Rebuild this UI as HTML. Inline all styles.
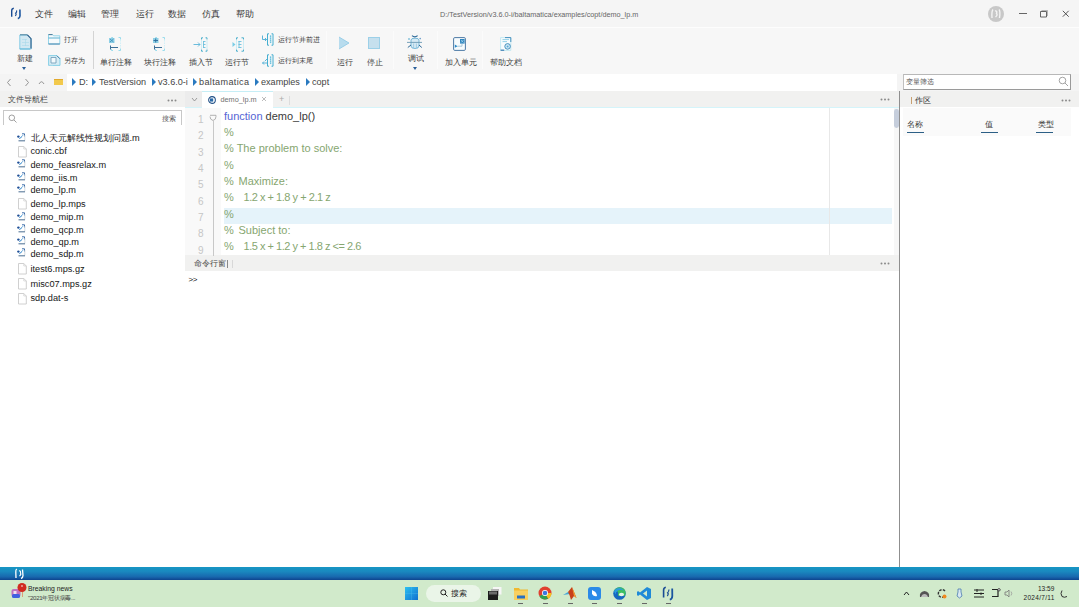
<!DOCTYPE html>
<html><head><meta charset="utf-8">
<style>
*{margin:0;padding:0;box-sizing:border-box}
html,body{width:1079px;height:607px;overflow:hidden;background:#fff;font-family:"Liberation Sans",sans-serif;color:#333}
.a{position:absolute;white-space:pre}
svg.a{overflow:visible}
#title{left:0;top:0;width:1079px;height:27px;background:#f5f5f5}
#tline{left:0;top:27px;width:1079px;height:1px;background:#fdfdfd}
#tool{left:0;top:28px;width:1079px;height:46px;background:#f7f7f7}
#addr{left:0;top:74px;width:1079px;height:17px;background:#f4f4f4}
#addrw{left:67px;top:74px;width:830px;height:16.5px;background:#fff}
#lhead{left:0;top:91px;width:185px;height:16px;background:#f1f1f0}
#lbody{left:0;top:107px;width:185px;height:460px;background:#fff}
#ehead{left:185px;top:91px;width:714px;height:16px;background:#f1f1f0}
#ebody{left:185px;top:107px;width:714px;height:148px;background:#fff}
#chead{left:185px;top:255px;width:714px;height:16px;background:#f1f1f0}
#cbody{left:185px;top:271px;width:714px;height:296px;background:#fff}
#vsep{left:899px;top:91px;width:1px;height:476px;background:#8f8f8f}
#rhead{left:900px;top:91px;width:179px;height:16px;background:#f1f1f0}
#rbody{left:900px;top:107px;width:179px;height:460px;background:#fff}
#tbblue{left:0;top:567px;width:1079px;height:13px;background:linear-gradient(#1697c4 0%,#1a88bf 35%,#1868ae 75%,#0e438e 100%)}
#tbgreen{left:0;top:580px;width:1079px;height:27px;background:#d1eacb}
.menu{top:9px;font-size:8.8px;line-height:11px;color:#3a3a3a}
.lbl{font-size:8px;line-height:10px;color:#3c3c3c}
.code{font-size:11px;line-height:13px;color:#86a670}
.ln{font-size:10px;line-height:12px;color:#c6c6c6;width:12px;text-align:right;left:191.5px}
.file{font-size:9.2px;line-height:11px;color:#161616;left:30.5px}
.crumb{font-size:9.1px;line-height:11px;color:#444;top:77px}
.tri{width:0;height:0;border-top:4px solid transparent;border-bottom:4px solid transparent;border-left:4px solid #2a7ac0;top:78px}
</style></head><body>
<div class="a" id="title"></div>
<div class="a" id="tline"></div>
<div class="a" id="tool"></div>
<div class="a" id="addr"></div>
<div class="a" id="addrw"></div>
<div class="a" id="lhead"></div>
<div class="a" id="lbody"></div>
<div class="a" id="ehead"></div>
<div class="a" id="ebody"></div>
<div class="a" id="chead"></div>
<div class="a" id="cbody"></div>
<div class="a" id="rhead"></div>
<div class="a" id="rbody"></div>
<div class="a" id="vsep"></div>
<div class="a" id="tbblue"></div>
<div class="a" id="tbgreen"></div>

<!-- ===== TITLE BAR ===== -->
<svg class="a" style="left:6px;top:4px" width="20" height="18" viewBox="0 0 20 18">
 <path d="M7.8 4.2 Q5.7 4.6 5.7 6.8 L5.7 12.8" stroke="#1a4c94" stroke-width="1.4" fill="none"/>
 <path d="M10.6 6.3 Q11.1 8 9.6 9.2 Q10.8 10.3 9.3 12" stroke="#1a4c94" stroke-width="1.1" fill="none"/>
 <path d="M13.9 5.4 L14 12 Q13.9 14.1 11.8 14.6" stroke="#1b56a0" stroke-width="1.6" fill="none"/>
</svg>
<div class="a menu" style="left:35px">文件</div>
<div class="a menu" style="left:68px">编辑</div>
<div class="a menu" style="left:101px">管理</div>
<div class="a menu" style="left:136px">运行</div>
<div class="a menu" style="left:168px">数据</div>
<div class="a menu" style="left:202px">仿真</div>
<div class="a menu" style="left:236px">帮助</div>
<div class="a" style="left:440px;top:10px;font-size:7.25px;line-height:9px;color:#666">D:/TestVersion/v3.6.0-i/baltamatica/examples/copt/demo_lp.m</div>
<!-- right controls -->
<svg class="a" style="left:987px;top:5px" width="18" height="18" viewBox="0 0 18 18">
 <circle cx="9" cy="9" r="8" fill="#c8c8c8"/>
 <path d="M6 4.5 Q4.5 6 5 13 M8 6 Q10.5 5.5 9.5 8.5 Q11 10 8.5 12 M12 4.5 Q13.5 6 12.5 13" stroke="#f4f4f4" stroke-width="1.4" fill="none"/>
</svg>
<div class="a" style="left:1018.5px;top:13px;width:8.5px;height:1px;background:#666"></div>
<svg class="a" style="left:1039px;top:9px" width="10" height="9" viewBox="0 0 10 9"><path d="M1.5 2.5 H7.5 V8 H1.5 Z" fill="none" stroke="#555" stroke-width="0.9"/><path d="M2.5 1.5 H8.5 V7" fill="none" stroke="#999" stroke-width="0.7"/></svg>
<svg class="a" style="left:1062px;top:10px" width="7.5" height="7.5" viewBox="0 0 7.5 7.5"><path d="M0.8 0.8L6.7 6.7M6.7 0.8L0.8 6.7" stroke="#444" stroke-width="0.9"/></svg>

<!-- ===== TOOLBAR ===== -->
<!-- 新建 -->
<svg class="a" style="left:18.5px;top:33.5px" width="13" height="16" viewBox="0 0 13 16">
 <path d="M0.8 1 H8.5 L12.2 4.8 V15 H0.8 Z" fill="#d2e8f2" stroke="#7cc8e4" stroke-width="0.9"/>
 <path d="M1 0.8 H8.4" stroke="#4f7f9c" stroke-width="1"/>
 <path d="M8.4 0.8 L12 4.6 V14.5" stroke="#2d5a86" stroke-width="1.1" fill="none"/>
 <path d="M0.8 15 H11" stroke="#5ab4d8" stroke-width="0.9"/>
 <path d="M6.5 5 V12 M3 8.5 H10 M3 5.5 H8 M3 11.5 H10" stroke="#a8d8ea" stroke-width="0.6"/>
</svg>
<div class="a lbl" style="left:17px;top:54px">新建</div>
<div class="a" style="left:22px;top:67px;width:0;height:0;border-left:2.5px solid transparent;border-right:2.5px solid transparent;border-top:3px solid #2a5f9a"></div>
<!-- 打开 -->
<svg class="a" style="left:48px;top:34px" width="12.5" height="10.5" viewBox="0 0 12.5 10.5">
 <path d="M0.5 0.6 H4.5 L5.5 1.8 H11.8 V10 H0.5 Z" fill="#f6fafc" stroke="#7ccce4" stroke-width="0.8"/>
 <path d="M0.5 0.6 H4.5" stroke="#4a7a98" stroke-width="1"/>
 <path d="M0.5 4 H11.8" stroke="#4aa8cc" stroke-width="0.9"/>
 <path d="M0.5 10 H11.8" stroke="#3a7aa8" stroke-width="0.9"/>
</svg>
<div class="a lbl" style="left:64px;top:35px;font-size:7.3px">打开</div>
<!-- 另存为 -->
<svg class="a" style="left:48px;top:54.5px" width="12.5" height="11" viewBox="0 0 12.5 11">
 <path d="M0.6 0.6 H8.8 L12 3.8 V10.4 H0.6 Z" fill="#d6ecf4" stroke="#7ccce4" stroke-width="0.9"/>
 <path d="M3 2.5 H8 V8 H3 Z" fill="#f2f9fc" stroke="#6a98b4" stroke-width="0.8"/>
 <path d="M8.8 0.6 L12 3.8" stroke="#3a7aa8" stroke-width="0.9"/>
 <path d="M1.5 10.4 H5" stroke="#a8dcec" stroke-width="0.8"/>
</svg>
<div class="a lbl" style="left:64px;top:56px;font-size:7.3px">另存为</div>
<div class="a" style="left:93px;top:31px;width:1px;height:38px;background:#d4d4d4"></div>

<!-- 单行注释 -->
<svg class="a" style="left:108px;top:36px" width="14" height="16" viewBox="0 0 14 16">
 <path d="M5 1.5 H3.5 V3 M10.5 1.5 H12.5 V3.5 M12.5 12.5 V14.5 H10.5 M3.5 13 V14.5 H5" stroke="#8fd8ea" stroke-width="0.9" fill="none"/>
 <path d="M12.5 4 V12" stroke="#c8eef6" stroke-width="0.8" stroke-dasharray="1.5 1"/>
 <rect x="1" y="2" width="5.5" height="5" fill="#8ed0e6"/>
 <path d="M2 3 L5.5 6 M5.5 3 L2 6" stroke="#3a8ab8" stroke-width="0.8"/>
 <path d="M2.5 9.5 V13.5 M2.5 11.5 H10" stroke="#3d6f98" stroke-width="1"/>
</svg>
<div class="a lbl" style="left:100px;top:58px">单行注释</div>
<!-- 块行注释 -->
<svg class="a" style="left:152px;top:36px" width="14" height="16" viewBox="0 0 14 16">
 <path d="M5 1.5 H3.5 V3 M10.5 1.5 H12.5 V3.5 M12.5 12.5 V14.5 H10.5 M3.5 13 V14.5 H5" stroke="#8fd8ea" stroke-width="0.9" fill="none"/>
 <path d="M12.5 4 V12" stroke="#c8eef6" stroke-width="0.8" stroke-dasharray="1.5 1"/>
 <rect x="1" y="2" width="5.5" height="5" fill="#8ed0e6"/>
 <path d="M3.7 2.5 V6.5 M1.5 4.5 H6" stroke="#2d6a9a" stroke-width="0.9"/>
 <path d="M2.5 9.5 V13.5 M2.5 11.5 H10" stroke="#3d6f98" stroke-width="1"/>
</svg>
<div class="a lbl" style="left:144px;top:58px">块行注释</div>
<!-- 插入节 -->
<svg class="a" style="left:192.5px;top:36.5px" width="15" height="15" viewBox="0 0 15 15">
 <path d="M8.5 2.5 V0.8 H10 M12.5 0.8 H14 V2.5 M14 12.5 V14.2 H12.5 M10 14.2 H8.5 V12.5" stroke="#3aa8c8" stroke-width="0.9" fill="none"/>
 <path d="M8.5 3 V12 M14 3 V12" stroke="#c0eaf4" stroke-width="0.8"/>
 <path d="M10 4.5 H12.5 M10 7.5 H12.5 M10 10.5 H12.5 M10.5 4 V11" stroke="#6cc0dc" stroke-width="0.9"/>
 <path d="M0.5 7.5 H7 M5 5.5 L7 7.5 L5 9.5" stroke="#5ab4d8" stroke-width="0.9" fill="none"/>
</svg>
<div class="a lbl" style="left:189px;top:58px">插入节</div>
<!-- 运行节 -->
<svg class="a" style="left:231.5px;top:36.5px" width="13" height="15" viewBox="0 0 13 15">
 <path d="M4.5 2.5 V0.8 H6 M9.5 0.8 H11.5 V2.5 M11.5 12.5 V14.2 H9.5 M6 14.2 H4.5 V12.5" stroke="#3aa8c8" stroke-width="0.9" fill="none"/>
 <path d="M4.5 3 V12 M11.5 3 V12" stroke="#c0eaf4" stroke-width="0.8"/>
 <path d="M6.5 4.5 H9.5 M6.5 7.5 H9.5 M6.5 10.5 H9.5 M7 4 V11" stroke="#6cc0dc" stroke-width="0.9"/>
 <path d="M0.5 5 L3.5 7.5 L0.5 10 Z" fill="#7ccde6"/>
</svg>
<div class="a lbl" style="left:225px;top:58px">运行节</div>
<!-- 运行节并前进 -->
<svg class="a" style="left:261px;top:32.5px" width="13" height="13" viewBox="0 0 13 13">
 <path d="M8 0.8 H6.5 V12.2 H8 M10.5 0.8 H12 V12.2 H10.5" stroke="#44aed0" stroke-width="1" fill="none"/>
 <rect x="8.5" y="2.5" width="2.2" height="8" fill="#e4f6fa"/>
 <path d="M9.6 2.5 V10.5" stroke="#4ab0d4" stroke-width="1.3" stroke-dasharray="1.2 0.8"/>
 <path d="M1.5 2.5 V6.5 H5.5 M4 5 L5.5 6.5 L4 8" stroke="#4aacd4" stroke-width="0.9" fill="none"/>
</svg>
<div class="a lbl" style="left:278px;top:35px;font-size:7.2px">运行节并前进</div>
<!-- 运行到末尾 -->
<svg class="a" style="left:261px;top:53.5px" width="13" height="13" viewBox="0 0 13 13">
 <path d="M8 0.8 H6.5 V12.2 H8 M10.5 0.8 H12 V12.2 H10.5" stroke="#44aed0" stroke-width="1" fill="none"/>
 <rect x="8.5" y="2.5" width="2.2" height="8" fill="#e4f6fa"/>
 <path d="M9.6 2.5 V10.5" stroke="#4ab0d4" stroke-width="1.3" stroke-dasharray="1.2 0.8"/>
 <path d="M7 9 H1.5 M3 7.5 L1.5 9 L3 10.5 M7 4 L4 7" stroke="#4aacd4" stroke-width="0.9" fill="none"/>
</svg>
<div class="a lbl" style="left:278px;top:56px;font-size:7.1px">运行到末尾</div>
<div class="a" style="left:326px;top:31px;width:1px;height:38px;background:#fbfbfb"></div>
<!-- 运行 -->
<svg class="a" style="left:338px;top:36px" width="12" height="14" viewBox="0 0 12 14">
 <path d="M1 1 L11 7 L1 13 Z" fill="#b8dcee"/>
 <path d="M1 1 L11 7 L1 13" fill="none" stroke="#8cc9e4" stroke-width="0.8"/>
</svg>
<div class="a lbl" style="left:337px;top:58px">运行</div>
<!-- 停止 -->
<svg class="a" style="left:368px;top:37px" width="12" height="12" viewBox="0 0 12 12">
 <rect x="0.5" y="0.5" width="11" height="11" fill="#c6e0ee" stroke="#9cd0e8" stroke-width="1"/>
</svg>
<div class="a lbl" style="left:367px;top:58px">停止</div>
<div class="a" style="left:393px;top:31px;width:1px;height:38px;background:#fbfbfb"></div>
<!-- 调试 -->
<svg class="a" style="left:406px;top:34px" width="17" height="15" viewBox="0 0 17 15">
 <path d="M5 6 Q5 4.2 9 4.2 Q13 4.2 13 6 V12 Q13 14.5 9 14.5 Q5 14.5 5 12 Z" fill="#d6eaf4" stroke="#5aaad0" stroke-width="0.8"/>
 <path d="M6 1.6 Q8.8 4.2 11.6 1.6" stroke="#2f6a98" stroke-width="1.2" fill="none"/>
 <path d="M1 8.4 H16" stroke="#6a98b4" stroke-width="0.9"/>
 <path d="M7.6 9.5 V14 M10.4 9.5 V14" stroke="#8cc0dc" stroke-width="0.7"/>
 <path d="M1.8 13.5 L5 11 M13 11 L15.8 13.5" stroke="#2f6a98" stroke-width="1"/>
 <circle cx="3" cy="5" r="0.8" fill="#3aa0c8"/><circle cx="14.2" cy="4.6" r="0.8" fill="#6a9ac8"/>
</svg>
<div class="a lbl" style="left:408px;top:54px">调试</div>
<div class="a" style="left:413px;top:67px;width:0;height:0;border-left:2.5px solid transparent;border-right:2.5px solid transparent;border-top:3px solid #2a5f9a"></div>
<div class="a" style="left:437px;top:31px;width:1px;height:38px;background:#fbfbfb"></div>
<!-- 加入单元 -->
<svg class="a" style="left:453px;top:37px" width="13" height="14" viewBox="0 0 13 14">
 <rect x="0.6" y="0.6" width="11.8" height="12.8" rx="1.2" fill="#f6fbfd" stroke="#3a6c9c" stroke-width="0.9"/>
 <rect x="7" y="2" width="4.6" height="4.6" fill="#2f86c0"/>
 <path d="M8 3 L10.5 5.5 M10.5 3 L8 5.5" stroke="#bfe4f4" stroke-width="0.6"/>
 <path d="M4.5 9.2 H9 V6.6" stroke="#8ab0c8" stroke-width="0.7" fill="none"/>
 <path d="M1.8 7.6 L4.6 9.2 L1.8 10.8 Z" fill="#2a8ac8"/>
</svg>
<div class="a lbl" style="left:445px;top:58px">加入单元</div>
<div class="a" style="left:482px;top:31px;width:1px;height:38px;background:#fbfbfb"></div>
<!-- 帮助文档 -->
<svg class="a" style="left:500px;top:37px" width="12" height="14" viewBox="0 0 12 14">
 <path d="M0.6 0.6 H10.8 V13.4 H0.6 Z" fill="#f8fcfd" stroke="#b8e4f0" stroke-width="0.8"/>
 <path d="M5 0.6 H10.8 V5" stroke="#3a88b8" stroke-width="0.9" fill="none"/>
 <path d="M2.5 2.6 H9 M2.5 4.6 H7" stroke="#6cc0e0" stroke-width="0.7"/>
 <circle cx="7.6" cy="9.4" r="2.8" fill="#cfe9f4" stroke="#3a88b8" stroke-width="0.9"/>
 <circle cx="7.6" cy="9.4" r="1" fill="#5aaad8"/>
 <path d="M0.6 13.2 H4.2" stroke="#3a7ab0" stroke-width="1.2"/>
</svg>
<div class="a lbl" style="left:490px;top:58px">帮助文档</div>

<!-- ===== ADDRESS BAR ===== -->
<svg class="a" style="left:6px;top:78px" width="40" height="9" viewBox="0 0 40 9">
 <path d="M4.5 1 L1.5 4.5 L4.5 8" stroke="#8a8a8a" stroke-width="0.9" fill="none"/>
 <path d="M19.5 1 L22.5 4.5 L19.5 8" stroke="#8a8a8a" stroke-width="0.9" fill="none"/>
 <path d="M33 6 Q35.5 1.5 38 6" stroke="#8a8a8a" stroke-width="0.9" fill="none"/>
</svg>
<div class="a" style="left:54px;top:79px;width:9px;height:6px;background:#f2c94c;border-top:1px solid #e2a92c"></div>
<div class="a tri" style="left:72px"></div><div class="a crumb" style="left:79px">D:</div>
<div class="a tri" style="left:92px"></div><div class="a crumb" style="left:99px">TestVersion</div>
<div class="a tri" style="left:152px"></div><div class="a crumb" style="left:158px">v3.6.0-i</div>
<div class="a tri" style="left:193px"></div><div class="a crumb" style="left:199px;letter-spacing:0.35px">baltamatica</div>
<div class="a tri" style="left:255px"></div><div class="a crumb" style="left:261px">examples</div>
<div class="a tri" style="left:306px"></div><div class="a crumb" style="left:312px">copt</div>
<!-- variable filter -->
<div class="a" style="left:903px;top:74px;width:168px;height:16px;background:#fff;border:1px solid #9a9a9a;border-top-color:#b8b8b8;border-left-color:#c0c0c0"></div>
<div class="a" style="left:906px;top:77px;font-size:7px;line-height:10px;color:#555">变量筛选</div>
<svg class="a" style="left:1058px;top:76px" width="11" height="11" viewBox="0 0 11 11"><circle cx="4.5" cy="4.5" r="3.3" fill="none" stroke="#999" stroke-width="0.9"/><path d="M7 7 L10 10" stroke="#999" stroke-width="0.9"/></svg>

<!-- ===== LEFT PANEL ===== -->
<div class="a" style="left:8px;top:95px;font-size:8px;line-height:10px;color:#444">文件导航栏</div>
<svg class="a" style="left:167px;top:98.5px" width="10" height="3" viewBox="0 0 10 3"><circle cx="1.5" cy="1.5" r="1" fill="#8a8a8a"/><circle cx="5" cy="1.5" r="1" fill="#8a8a8a"/><circle cx="8.5" cy="1.5" r="1" fill="#8a8a8a"/></svg>
<div class="a" style="left:3px;top:110px;width:179px;height:15px;border:1px solid #c8c8c8;border-bottom:none;background:#fff"></div>
<svg class="a" style="left:7.5px;top:113.5px" width="9" height="9" viewBox="0 0 9 9"><circle cx="3.8" cy="3.8" r="2.8" fill="none" stroke="#888" stroke-width="0.8"/><path d="M6 6 L8.5 8.5" stroke="#888" stroke-width="0.8"/></svg>
<div class="a" style="left:162px;top:114px;font-size:7px;line-height:9px;color:#555">搜索</div>

<!-- file icons + names -->
<svg class="a" style="left:17px;top:133px" width="9" height="9" viewBox="0 0 9 9"><path d="M5 0.8 H7.5 V3.5" stroke="#2a5fa0" stroke-width="0.9" fill="none"/><path d="M7.8 2 V7.5" stroke="#c8d0d8" stroke-width="0.8"/><circle cx="1.4" cy="3.6" r="1.2" fill="#1e4f96"/><path d="M2.2 6 L6 2.2 M3 5.5 L4.5 4" stroke="#5aa0d8" stroke-width="1" fill="none"/><path d="M1.5 7.8 H8" stroke="#5a7a9a" stroke-width="1.1"/></svg>
<div class="a file" style="top:133px">北人天元解线性规划问题.m</div>
<svg class="a" style="left:17.5px;top:145.5px" width="9" height="12" viewBox="0 0 9 12"><path d="M0.5 0.5 H5.8 L8.3 3 V11 H0.5 Z" fill="#fff" stroke="#c4c4c4" stroke-width="0.8"/><path d="M5.8 0.5 V3 H8.3" fill="none" stroke="#d0d0d0" stroke-width="0.7"/></svg>
<div class="a file" style="top:146px">conic.cbf</div>
<svg class="a" style="left:17px;top:159px" width="9" height="9" viewBox="0 0 9 9"><path d="M5 0.8 H7.5 V3.5" stroke="#2a5fa0" stroke-width="0.9" fill="none"/><path d="M7.8 2 V7.5" stroke="#c8d0d8" stroke-width="0.8"/><circle cx="1.4" cy="3.6" r="1.2" fill="#1e4f96"/><path d="M2.2 6 L6 2.2 M3 5.5 L4.5 4" stroke="#5aa0d8" stroke-width="1" fill="none"/><path d="M1.5 7.8 H8" stroke="#5a7a9a" stroke-width="1.1"/></svg>
<div class="a file" style="top:160px">demo_feasrelax.m</div>
<svg class="a" style="left:17px;top:172px" width="9" height="9" viewBox="0 0 9 9"><path d="M5 0.8 H7.5 V3.5" stroke="#2a5fa0" stroke-width="0.9" fill="none"/><path d="M7.8 2 V7.5" stroke="#c8d0d8" stroke-width="0.8"/><circle cx="1.4" cy="3.6" r="1.2" fill="#1e4f96"/><path d="M2.2 6 L6 2.2 M3 5.5 L4.5 4" stroke="#5aa0d8" stroke-width="1" fill="none"/><path d="M1.5 7.8 H8" stroke="#5a7a9a" stroke-width="1.1"/></svg>
<div class="a file" style="top:173px">demo_iis.m</div>
<svg class="a" style="left:17px;top:184px" width="9" height="9" viewBox="0 0 9 9"><path d="M5 0.8 H7.5 V3.5" stroke="#2a5fa0" stroke-width="0.9" fill="none"/><path d="M7.8 2 V7.5" stroke="#c8d0d8" stroke-width="0.8"/><circle cx="1.4" cy="3.6" r="1.2" fill="#1e4f96"/><path d="M2.2 6 L6 2.2 M3 5.5 L4.5 4" stroke="#5aa0d8" stroke-width="1" fill="none"/><path d="M1.5 7.8 H8" stroke="#5a7a9a" stroke-width="1.1"/></svg>
<div class="a file" style="top:185px">demo_lp.m</div>
<svg class="a" style="left:17.5px;top:197.5px" width="9" height="12" viewBox="0 0 9 12"><path d="M0.5 0.5 H5.8 L8.3 3 V11 H0.5 Z" fill="#fff" stroke="#c4c4c4" stroke-width="0.8"/><path d="M5.8 0.5 V3 H8.3" fill="none" stroke="#d0d0d0" stroke-width="0.7"/></svg>
<div class="a file" style="top:199px">demo_lp.mps</div>
<svg class="a" style="left:17px;top:212px" width="9" height="9" viewBox="0 0 9 9"><path d="M5 0.8 H7.5 V3.5" stroke="#2a5fa0" stroke-width="0.9" fill="none"/><path d="M7.8 2 V7.5" stroke="#c8d0d8" stroke-width="0.8"/><circle cx="1.4" cy="3.6" r="1.2" fill="#1e4f96"/><path d="M2.2 6 L6 2.2 M3 5.5 L4.5 4" stroke="#5aa0d8" stroke-width="1" fill="none"/><path d="M1.5 7.8 H8" stroke="#5a7a9a" stroke-width="1.1"/></svg>
<div class="a file" style="top:212px">demo_mip.m</div>
<svg class="a" style="left:17px;top:224px" width="9" height="9" viewBox="0 0 9 9"><path d="M5 0.8 H7.5 V3.5" stroke="#2a5fa0" stroke-width="0.9" fill="none"/><path d="M7.8 2 V7.5" stroke="#c8d0d8" stroke-width="0.8"/><circle cx="1.4" cy="3.6" r="1.2" fill="#1e4f96"/><path d="M2.2 6 L6 2.2 M3 5.5 L4.5 4" stroke="#5aa0d8" stroke-width="1" fill="none"/><path d="M1.5 7.8 H8" stroke="#5a7a9a" stroke-width="1.1"/></svg>
<div class="a file" style="top:225px">demo_qcp.m</div>
<svg class="a" style="left:17px;top:236px" width="9" height="9" viewBox="0 0 9 9"><path d="M5 0.8 H7.5 V3.5" stroke="#2a5fa0" stroke-width="0.9" fill="none"/><path d="M7.8 2 V7.5" stroke="#c8d0d8" stroke-width="0.8"/><circle cx="1.4" cy="3.6" r="1.2" fill="#1e4f96"/><path d="M2.2 6 L6 2.2 M3 5.5 L4.5 4" stroke="#5aa0d8" stroke-width="1" fill="none"/><path d="M1.5 7.8 H8" stroke="#5a7a9a" stroke-width="1.1"/></svg>
<div class="a file" style="top:237px">demo_qp.m</div>
<svg class="a" style="left:17px;top:248px" width="9" height="9" viewBox="0 0 9 9"><path d="M5 0.8 H7.5 V3.5" stroke="#2a5fa0" stroke-width="0.9" fill="none"/><path d="M7.8 2 V7.5" stroke="#c8d0d8" stroke-width="0.8"/><circle cx="1.4" cy="3.6" r="1.2" fill="#1e4f96"/><path d="M2.2 6 L6 2.2 M3 5.5 L4.5 4" stroke="#5aa0d8" stroke-width="1" fill="none"/><path d="M1.5 7.8 H8" stroke="#5a7a9a" stroke-width="1.1"/></svg>
<div class="a file" style="top:249px">demo_sdp.m</div>
<svg class="a" style="left:17.5px;top:262.5px" width="9" height="12" viewBox="0 0 9 12"><path d="M0.5 0.5 H5.8 L8.3 3 V11 H0.5 Z" fill="#fff" stroke="#c4c4c4" stroke-width="0.8"/><path d="M5.8 0.5 V3 H8.3" fill="none" stroke="#d0d0d0" stroke-width="0.7"/></svg>
<div class="a file" style="top:264px">itest6.mps.gz</div>
<svg class="a" style="left:17.5px;top:277.5px" width="9" height="12" viewBox="0 0 9 12"><path d="M0.5 0.5 H5.8 L8.3 3 V11 H0.5 Z" fill="#fff" stroke="#c4c4c4" stroke-width="0.8"/><path d="M5.8 0.5 V3 H8.3" fill="none" stroke="#d0d0d0" stroke-width="0.7"/></svg>
<div class="a file" style="top:279px">misc07.mps.gz</div>
<svg class="a" style="left:17.5px;top:292.5px" width="9" height="12" viewBox="0 0 9 12"><path d="M0.5 0.5 H5.8 L8.3 3 V11 H0.5 Z" fill="#fff" stroke="#c4c4c4" stroke-width="0.8"/><path d="M5.8 0.5 V3 H8.3" fill="none" stroke="#d0d0d0" stroke-width="0.7"/></svg>
<div class="a file" style="top:293px">sdp.dat-s</div>

<!-- ===== EDITOR ===== -->
<div class="a" style="left:185px;top:91px;width:17px;height:16px;background:#ececec"></div>
<svg class="a" style="left:190.5px;top:97px" width="7" height="5" viewBox="0 0 7 5"><path d="M1 1 L3.5 4 L6 1" stroke="#888" stroke-width="0.8" fill="none"/></svg>
<div class="a" style="left:202px;top:91px;width:71px;height:16px;background:#fff;border-top:1px solid #c6eef6"></div>
<div class="a" style="left:185px;top:107px;width:17px;height:1px;background:#d4f4fa"></div>
<div class="a" style="left:273px;top:107px;width:626px;height:1px;background:#d4f4fa"></div>
<svg class="a" style="left:208px;top:96px" width="8" height="8" viewBox="0 0 10 10">
 <circle cx="5" cy="5" r="4.2" fill="#fff" stroke="#1f4f86" stroke-width="1.3"/>
 <rect x="2.5" y="3" width="4" height="4" fill="#2a6aa8"/>
</svg>
<div class="a" style="left:220.5px;top:95px;font-size:7.3px;line-height:10px;color:#707070">demo_lp.m</div>
<svg class="a" style="left:261px;top:96px" width="6" height="6" viewBox="0 0 6 6"><path d="M1 1L5 5M5 1L1 5" stroke="#aaa" stroke-width="0.8"/></svg>
<div class="a" style="left:279px;top:94px;font-size:9px;line-height:10px;color:#aaa">+</div>
<div class="a" style="left:289px;top:96px;width:1px;height:9px;background:#ddd"></div>
<svg class="a" style="left:880px;top:98px" width="10" height="3" viewBox="0 0 10 3"><circle cx="1.5" cy="1.5" r="1" fill="#8a8a8a"/><circle cx="5" cy="1.5" r="1" fill="#8a8a8a"/><circle cx="8.5" cy="1.5" r="1" fill="#8a8a8a"/></svg>

<div class="a" style="left:185px;top:108px;width:36px;height:147px;background:#f9f9f9"></div>
<!-- line numbers -->
<div class="a ln" style="top:114px">1</div>
<div class="a ln" style="top:130px">2</div>
<div class="a ln" style="top:147px">3</div>
<div class="a ln" style="top:163px">4</div>
<div class="a ln" style="top:179px">5</div>
<div class="a ln" style="top:196px">6</div>
<div class="a ln" style="top:212px">7</div>
<div class="a ln" style="top:228px">8</div>
<div class="a ln" style="top:245px">9</div>
<svg class="a" style="left:209px;top:114px" width="8" height="8" viewBox="0 0 8 8"><path d="M1 1.3 H7 V2.5 Q7 5.8 4 6.5 Q1 5.8 1 2.5" stroke="#a0a0a0" stroke-width="0.8" fill="none"/></svg>
<div class="a" style="left:212.5px;top:120.5px;width:0.8px;height:135px;background:#c8c8c8"></div>
<div class="a" style="left:224px;top:207.5px;width:668px;height:16px;background:#e5f3fa"></div>
<div class="a" style="left:829px;top:108px;width:1px;height:147px;background:#e8e8e8"></div>
<div class="a" style="left:893.5px;top:108px;width:5.5px;height:147px;background:#f7f7f7"></div>
<div class="a" style="left:894px;top:108.5px;width:4.8px;height:19px;border-radius:2.4px;background:#c6cedc"></div>

<div class="a code" style="left:224px;top:110px"><span style="color:#5564d4">function</span> <span style="color:#3a3a3a">demo_lp()</span></div>
<div class="a code" style="left:224px;top:126px">%</div>
<div class="a code" style="left:224px;top:142px">% The problem to solve:</div>
<div class="a code" style="left:224px;top:159px">%</div>
<div class="a code" style="left:224px;top:175px">%</div><div class="a code" style="left:238.5px;top:175px">Maximize:</div>
<div class="a code" style="left:224px;top:191px">%</div><div class="a code" style="left:243.5px;top:191px;letter-spacing:-0.47px">1.2 x + 1.8 y + 2.1 z</div>
<div class="a code" style="left:224px;top:208px">%</div>
<div class="a code" style="left:224px;top:224px">%</div><div class="a code" style="left:238.5px;top:224px">Subject to:</div>
<div class="a code" style="left:224px;top:240px">%</div><div class="a code" style="left:243.5px;top:240px;letter-spacing:-0.48px">1.5 x + 1.2 y + 1.8 z &lt;= 2.6</div>

<!-- ===== COMMAND WINDOW ===== -->
<div class="a" style="left:194px;top:259px;font-size:8px;line-height:10px;color:#444">命令行窗</div>
<div class="a" style="left:227px;top:260px;width:1px;height:8px;background:#888"></div>
<div class="a" style="left:232px;top:260px;width:1px;height:8px;background:#d8d8d8"></div>
<svg class="a" style="left:880px;top:262px" width="10" height="3" viewBox="0 0 10 3"><circle cx="1.5" cy="1.5" r="1" fill="#8a8a8a"/><circle cx="5" cy="1.5" r="1" fill="#8a8a8a"/><circle cx="8.5" cy="1.5" r="1" fill="#8a8a8a"/></svg>
<div class="a" style="left:188.5px;top:275px;font-size:8px;line-height:10px;color:#111;letter-spacing:-0.5px">&gt;&gt;</div>

<!-- ===== RIGHT PANEL ===== -->
<div class="a" style="left:911px;top:97px;width:1px;height:7px;background:#c8a070"></div>
<div class="a" style="left:915px;top:95.5px;font-size:8.2px;line-height:10px;color:#333">作区</div>
<svg class="a" style="left:1061px;top:98.5px" width="10" height="3" viewBox="0 0 10 3"><circle cx="1.5" cy="1.5" r="1" fill="#8a8a8a"/><circle cx="5" cy="1.5" r="1" fill="#8a8a8a"/><circle cx="8.5" cy="1.5" r="1" fill="#8a8a8a"/></svg>
<div class="a" style="left:903px;top:108px;width:168px;height:28px;background:#fafafa"></div>
<div class="a" style="left:907px;top:120px;font-size:7.5px;line-height:9px;color:#333">名称</div>
<div class="a" style="left:985px;top:120px;font-size:7.5px;line-height:9px;color:#333">值</div>
<div class="a" style="left:1038px;top:120px;font-size:7.5px;line-height:9px;color:#333">类型</div>
<div class="a" style="left:907px;top:132px;width:17px;height:1px;background:#2c5f86"></div>
<div class="a" style="left:981px;top:132px;width:17px;height:1px;background:#2c5f86"></div>
<div class="a" style="left:1036px;top:132px;width:17px;height:1px;background:#2c5f86"></div>

<!-- ===== TASKBAR ===== -->

<!-- news widget -->
<svg class="a" style="left:10px;top:582px" width="18" height="18" viewBox="0 0 18 18">
 <rect x="1.5" y="7" width="9" height="8" rx="2" fill="#c070c0"/>
 <rect x="2" y="12" width="8" height="4" rx="1.5" fill="#4060e0"/>
 <rect x="3.5" y="9" width="3" height="3" fill="#f0e0f0"/>
 <circle cx="12" cy="5.5" r="4.5" fill="#d02a20"/>
 <circle cx="12" cy="4" r="0.8" fill="#fff"/>
 <path d="M12.5 10 V15" stroke="#e08a60" stroke-width="0.8"/>
</svg>
<div class="a" style="left:28px;top:585px;font-size:6.8px;line-height:8px;color:#222">Breaking news</div>
<div class="a" style="left:28px;top:594px;font-size:6.2px;line-height:8px;color:#444;letter-spacing:-0.3px">"2021年冠状病毒...</div>
<!-- baltamatica logo in blue band -->
<svg class="a" style="left:14px;top:568px" width="11" height="11" viewBox="0 0 11 11">
 <path d="M3 1 Q1.5 1.5 1.8 4 L2 10" stroke="#fff" stroke-width="1.3" fill="none"/>
 <path d="M5 3 Q7 2.5 6.5 5 Q7.5 6.5 5.5 8" stroke="#fff" stroke-width="1.1" fill="none"/>
 <path d="M8.5 1.5 L9 7.5 Q9 10 7 10.5" stroke="#fff" stroke-width="1.3" fill="none"/>
</svg>
<!-- windows -->
<svg class="a" style="left:405px;top:587px" width="13" height="13" viewBox="0 0 13 13">
 <defs><linearGradient id="wg" x1="0" y1="0" x2="1" y2="1"><stop offset="0" stop-color="#2cc0f0"/><stop offset="1" stop-color="#1070d0"/></linearGradient></defs>
 <rect x="0" y="0" width="13" height="13" fill="url(#wg)"/><path d="M6.5 0 V13 M0 6.5 H13" stroke="#5cc8f0" stroke-width="0.4" opacity="0.7"/>
</svg>
<!-- search pill -->
<div class="a" style="left:426px;top:585px;width:55px;height:17px;border-radius:9px;background:#eaf5e8"></div>
<svg class="a" style="left:440px;top:589px" width="8" height="8" viewBox="0 0 8 8"><circle cx="3.3" cy="3.3" r="2.5" fill="none" stroke="#222" stroke-width="1"/><path d="M5 5 L7.5 7.5" stroke="#222" stroke-width="1"/></svg>
<div class="a" style="left:450.5px;top:589px;font-size:8px;line-height:10px;color:#222">搜索</div>
<!-- task view -->
<svg class="a" style="left:488px;top:587px" width="14" height="13" viewBox="0 0 14 13">
 <rect x="5" y="0" width="8.5" height="7.5" fill="#f6f6f6"/>
 <rect x="3" y="2" width="8" height="7" fill="#b4b4b4"/>
 <rect x="0" y="4" width="10" height="9" fill="#1c1c1c"/>
 <rect x="1" y="4.5" width="8" height="3" fill="#6a6a6a"/>
</svg>
<!-- explorer -->
<svg class="a" style="left:514px;top:587px" width="14" height="13" viewBox="0 0 14 13">
 <path d="M0 1 H5 L6 2.5 H14 V13 H0 Z" fill="#f0b830"/>
 <rect x="0" y="3.5" width="14" height="9.5" fill="#f8d060"/>
 <rect x="3" y="8.5" width="8" height="3" fill="#2a70c0"/>
</svg>
<div class="a" style="left:518px;top:603px;width:5px;height:1px;background:#666"></div>
<!-- chrome -->
<svg class="a" style="left:538px;top:586px" width="14" height="14" viewBox="0 0 14 14">
 <circle cx="7" cy="7" r="6.5" fill="#e04030"/>
 <path d="M7 7 L1.4 10.2 A6.5 6.5 0 0 0 10.2 12.7 Z" fill="#30a050"/>
 <path d="M7 7 L10.2 12.7 A6.5 6.5 0 0 0 13.5 7 L7 7 Z" fill="#f8c020"/>
 <circle cx="7" cy="7" r="3" fill="#fff"/><circle cx="7" cy="7" r="2.3" fill="#3a78e0"/>
</svg>
<div class="a" style="left:543px;top:603px;width:5px;height:1px;background:#666"></div>
<!-- matlab -->
<svg class="a" style="left:563px;top:587px" width="14" height="13" viewBox="0 0 14 13">
 <path d="M0 8 L5 5 L7 7 Z" fill="#4aa8d8"/>
 <path d="M5 5 L9 0 L13.5 11 L11 9 L8 13 L6.5 8 Z" fill="#c8401a"/>
 <path d="M9 0 L13.5 11 L11 9 Z" fill="#f0a030"/>
</svg>
<div class="a" style="left:568px;top:603px;width:5px;height:1px;background:#666"></div>
<!-- feishu-like blue -->
<svg class="a" style="left:588px;top:587px" width="13" height="13" viewBox="0 0 13 13">
 <rect x="0" y="0" width="13" height="13" rx="3" fill="#2a8ae8"/>
 <path d="M4 3 Q9 5 9 9 Q6 10 4 7 Z" fill="#fff"/>
</svg>
<div class="a" style="left:592px;top:603px;width:5px;height:1px;background:#666"></div>
<!-- edge -->
<svg class="a" style="left:613px;top:587px" width="13" height="13" viewBox="0 0 13 13">
 <circle cx="6.5" cy="6.5" r="6.3" fill="#1668c0"/>
 <path d="M1 4 Q3 0.2 7 0.3 Q12.5 0.8 12.7 6.5 Q12.5 9 10 9 L6 9 Q4.5 8.8 5 7 Q6 4 3.5 4.5 Z" fill="#3cc060"/>
 <path d="M1 4 Q3 0.8 6.5 1 Q10 1.3 11 4 Q8 2 5 3.5 Q2.5 5 2.5 7.5 Z" fill="#2a9ae0"/>
 <ellipse cx="8.5" cy="7.5" rx="2.6" ry="1.8" fill="#e8f4e8"/>
</svg>
<div class="a" style="left:617px;top:603px;width:5px;height:1px;background:#666"></div>
<!-- vscode -->
<svg class="a" style="left:637px;top:587px" width="14" height="13" viewBox="0 0 14 13">
 <path d="M10 0 L14 2 V11 L10 13 L3 7.5 L1 9 L0 8 V5 L1 4 L3 5.5 Z M10 3.5 L6 6.5 L10 9.5 Z" fill="#1f8ad8"/>
</svg>
<div class="a" style="left:642px;top:603px;width:5px;height:1px;background:#666"></div>
<!-- baltamatica -->
<svg class="a" style="left:658px;top:584px" width="20" height="18" viewBox="0 0 20 18">
 <path d="M7.8 3.2 Q5.6 3.6 5.6 6 L5.6 13.5" stroke="#1a4c94" stroke-width="1.6" fill="none"/>
 <path d="M10.8 5.5 Q11.3 7.5 9.6 8.8 Q11 10 9.3 12" stroke="#1a4c94" stroke-width="1.2" fill="none"/>
 <path d="M14.2 4.5 L14.3 12 Q14.2 15.2 11.8 15.7" stroke="#1b56a0" stroke-width="1.8" fill="none"/>
</svg>
<div class="a" style="left:666px;top:603px;width:5px;height:1px;background:#666"></div>
<!-- tray -->
<svg class="a" style="left:903px;top:591px" width="7" height="5" viewBox="0 0 7 5"><path d="M1 4 L3.5 1 L6 4" stroke="#222" stroke-width="1" fill="none"/></svg>
<svg class="a" style="left:919px;top:589px" width="11" height="9" viewBox="0 0 11 9"><path d="M1 8 Q0 3 5.5 2 Q11 3 10 8 Z" fill="#555"/><path d="M2 8 Q3 5 5.5 5 Q8 5 9 8" fill="#bbb"/></svg>
<svg class="a" style="left:937px;top:588px" width="10" height="11" viewBox="0 0 10 11"><path d="M8 3 A3.8 3.8 0 1 0 8 8" stroke="#333" stroke-width="1.4" fill="none" stroke-dasharray="2.5 1.2"/><circle cx="7.5" cy="8.5" r="2" fill="#f08a20"/></svg>
<svg class="a" style="left:956px;top:588px" width="7" height="11" viewBox="0 0 7 11"><path d="M2 1 H5 V4 L6 8 L3.5 10 L1 8 L2 4 Z" fill="#d8e8f0" stroke="#4a7ab0" stroke-width="0.8"/></svg>
<svg class="a" style="left:974px;top:589px" width="10" height="9" viewBox="0 0 10 9"><path d="M0 1 H10 M0 4.5 H10 M0 8 H10 M3 0 V3 M7 3.5 V6" stroke="#222" stroke-width="1"/></svg>
<svg class="a" style="left:991px;top:588px" width="10" height="10" viewBox="0 0 10 10"><path d="M1 1.5 H7 V8.5 H1" stroke="#222" stroke-width="1.2" fill="none"/><circle cx="8" cy="1.8" r="1.2" fill="#fff" stroke="#222" stroke-width="0.8"/></svg>
<svg class="a" style="left:1004px;top:589px" width="10" height="9" viewBox="0 0 10 9"><path d="M1 3 H3 L5 1 V8 L3 6 H1 Z" fill="none" stroke="#777" stroke-width="0.8"/><path d="M7 2.5 Q8.5 4.5 7 6.5" stroke="#999" stroke-width="0.8" fill="none"/></svg>
<div class="a" style="left:1038px;top:585px;font-size:6.5px;line-height:8px;color:#222">13:59</div>
<div class="a" style="left:1023.5px;top:594px;font-size:6.5px;line-height:8px;color:#222;letter-spacing:0.3px">2024/7/11</div>
<svg class="a" style="left:1060px;top:589px" width="9" height="9" viewBox="0 0 9 9"><path d="M2 1.5 Q0 4.5 2 7.5 Q4.5 9 7 7.5" stroke="#333" stroke-width="1" fill="none"/></svg>


</body></html>
